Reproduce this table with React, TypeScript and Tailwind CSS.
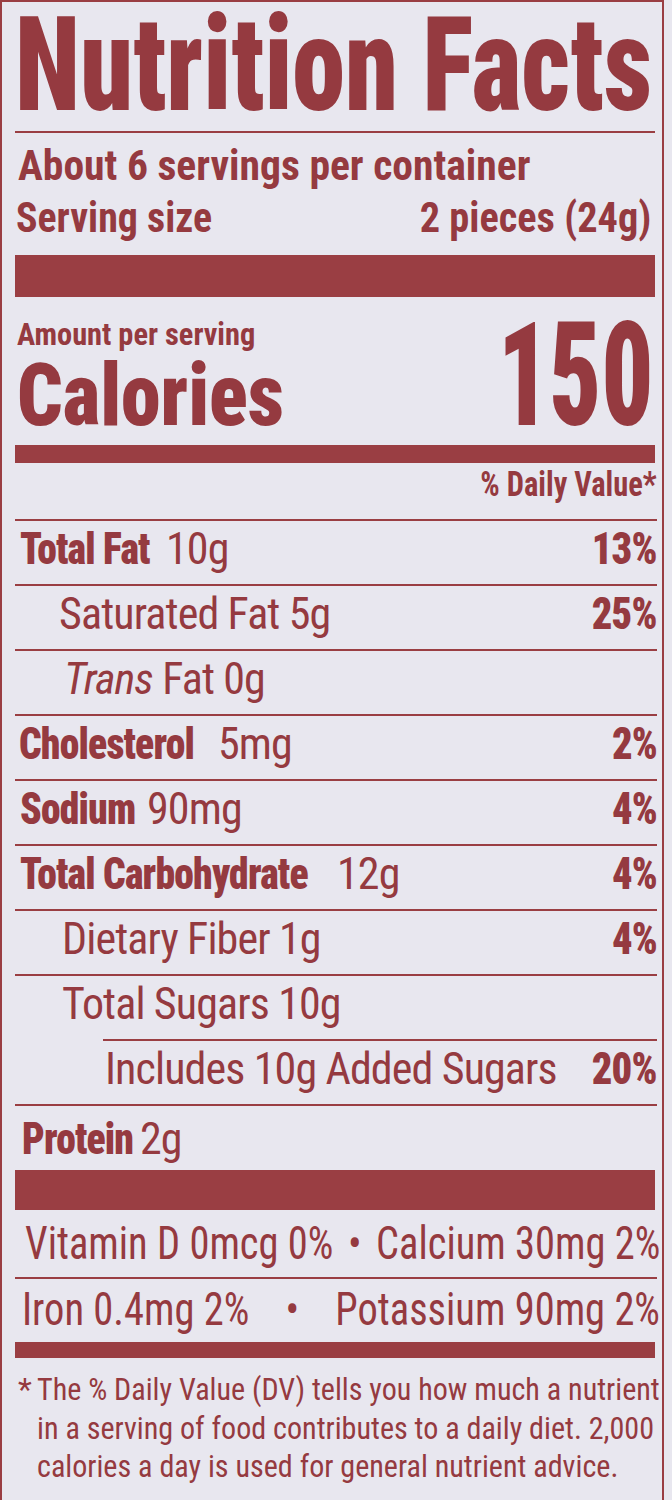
import React from 'react';

// label is printed in a heavy condensed grotesque; Roboto at 75% width + a horizontal squeeze gets close
function Sq({ cls, children }: { cls: string; children: React.ReactNode }) {
  return <span className={`inline-block whitespace-nowrap ${cls}`}>{children}</span>;
}

function Lbl({ w, children }: { w: string; children: React.ReactNode }) {
  return (
    <span className={`inline-block ${w}`}>
      <span className="inline-block whitespace-nowrap origin-left scale-x-[0.9] font-black">{children}</span>
    </span>
  );
}

function Dv({ children }: { children: React.ReactNode }) {
  return <span className="inline-block whitespace-nowrap origin-right scale-x-[0.92] font-black">{children}</span>;
}

function Rule({ cls = '' }: { cls?: string }) {
  return <div className={`h-[2px] bg-[#9a3e43] ${cls}`} />;
}

function Row({ children, dv, cls = 'h-[63px] leading-[57px]' }: { children: React.ReactNode; dv?: string; cls?: string }) {
  return (
    <div className={`flex justify-between whitespace-nowrap text-[44px] tracking-[-0.02em] ${cls}`}>
      <div>{children}</div>
      {dv && <Dv>{dv}</Dv>}
    </div>
  );
}

export default function App() {
  return (
    <div className="min-h-[1500px] w-[672px] overflow-hidden bg-[#e8e7ef] font-['Roboto','Open_Sans',sans-serif] font-stretch-condensed text-[#953a40]">
      <div className="w-[664px] min-h-[1500px] border-l-2 border-t-2 border-r-2 border-[#9a3e43] pl-[13px] pr-[5px]">
        {/* title */}
        <div className="h-[126px] text-[131px] leading-[126px]">
          <Sq cls="origin-left scale-x-[0.815] font-black">Nutrition Facts</Sq>
        </div>
        <div className="mt-[3px] h-[2px] bg-[#9a3e43] mr-[2px]" />

        {/* servings */}
        <div className="h-[65px] pl-[3px] text-[42px] leading-[65px] font-bold">
          <Sq cls="origin-left scale-x-[0.99]">About 6 servings per container</Sq>
        </div>
        <div className="flex h-[40px] justify-between pl-[1px] pr-[6px] text-[42px] leading-[40px] font-bold">
          <Sq cls="origin-left scale-x-[0.95]">Serving size</Sq>
          <Sq cls="origin-right scale-x-[0.96]">2 pieces (24g)</Sq>
        </div>
        <div className="mt-[17px] h-[42px] bg-[#9a3e43] mr-[2px]" />

        {/* calories */}
        <div className="flex h-[148px] justify-between">
          <div className="pl-[2px]">
            <div className="h-[74px] text-[32px] leading-[74px] font-bold">
              <Sq cls="origin-left scale-x-[0.95]">Amount per serving</Sq>
            </div>
            <div className="h-[48px] text-[87px] leading-[48px]">
              <Sq cls="origin-left scale-x-[0.92] font-black">Calories</Sq>
            </div>
          </div>
          <div className="h-[148px] pr-[4px] text-[145px] leading-[157px]">
            <Sq cls="origin-right scale-x-[0.70] font-black">150</Sq>
          </div>
        </div>
        <div className="h-[18px] bg-[#9a3e43] mr-[2px]" />

        <div className="h-[56px] text-right text-[35px] leading-[44px] font-bold">
          <Sq cls="origin-right scale-x-[0.87]">% Daily Value*</Sq>
        </div>

        {/* nutrients */}
        <Rule />
        <Row dv="13%">
          <span className="pl-[5px]" />
          <Lbl w="w-[130px]">Total Fat</Lbl>
          <span className="ml-[16px]">10g</span>
        </Row>
        <Rule />
        <Row dv="25%">
          <span className="pl-[44px]">Saturated Fat 5g</span>
        </Row>
        <Rule />
        <Row>
          <span className="pl-[49px]"><i>Trans</i> Fat 0g</span>
        </Row>
        <Rule />
        <Row dv="2%">
          <span className="pl-[4px]" />
          <Lbl w="w-[182px]">Cholesterol</Lbl>
          <span className="ml-[17px]">5mg</span>
        </Row>
        <Rule />
        <Row dv="4%">
          <span className="pl-[5px]" />
          <Lbl w="w-[115px]">Sodium</Lbl>
          <span className="ml-[12px]">90mg</span>
        </Row>
        <Rule />
        <Row dv="4%">
          <span className="pl-[5px]" />
          <Lbl w="w-[305px]">Total Carbohydrate</Lbl>
          <span className="ml-[12px]">12g</span>
        </Row>
        <Rule />
        <Row dv="4%">
          <span className="pl-[47px]">Dietary Fiber 1g</span>
        </Row>
        <Rule />
        <Row>
          <span className="pl-[47px]">Total Sugars 10g</span>
        </Row>
        <Rule cls="ml-[88px]" />
        <Row dv="20%">
          <span className="pl-[90px]">Includes 10g Added Sugars</span>
        </Row>
        <Rule />
        <Row cls="h-[64px] leading-[66px]">
          <span className="pl-[7px]" />
          <Lbl w="w-[113px]">Protein</Lbl>
          <span className="ml-[5px]">2g</span>
        </Row>
        <div className="h-[40px] bg-[#9a3e43] mr-[2px]" />

        {/* vitamins & minerals */}
        <div className="h-[67px] pl-[10px] text-[46px] leading-[67px] whitespace-nowrap">
          <div className="flex w-[722px] origin-left scale-x-[0.88] justify-between">
            <span>Vitamin D 0mcg 0%</span>
            <span>•</span>
            <span>Calcium 30mg 2%</span>
          </div>
        </div>
        <Rule />
        <div className="h-[61px] pl-[7px] text-[46px] leading-[61px] whitespace-nowrap">
          <div className="flex w-[725px] origin-left scale-x-[0.88] justify-between">
            <span>Iron 0.4mg 2%</span>
            <span>•</span>
            <span>Potassium 90mg 2%</span>
          </div>
        </div>
        <div className="mt-[2px] h-[16px] bg-[#9a3e43] mr-[2px]" />

        {/* footnote */}
        <div className="flex pt-[12px] text-[32px] leading-[38.5px] whitespace-nowrap">
          <span className="w-[22px] shrink-0 pl-[3px]">*</span>
          <div className="origin-left scale-x-[0.94]">
            The % Daily Value (DV) tells you how much a nutrient
            <br />
            in a serving of food contributes to a daily diet. 2,000
            <br />
            calories a day is used for general nutrient advice.
          </div>
        </div>
      </div>
    </div>
  );
}
